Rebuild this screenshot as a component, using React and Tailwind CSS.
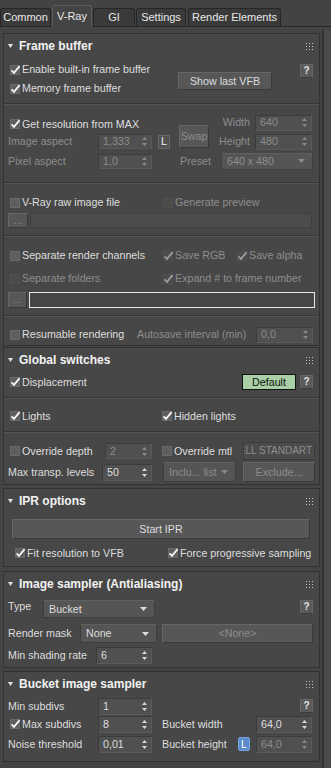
import React from "react";

const T = "text-[#dedede]";
const D = "text-[#8d8d8d]";

function Check({ checked, disabled }) {
  return (
    <svg width="12" height="12" viewBox="0 0 12 12" className="shrink-0">
      <rect x="0.5" y="1.5" width="9" height="9" fill={disabled ? "#4b4b4b" : "#5e5e5e"} stroke={disabled ? "#515151" : "#6a6a6a"} />
      {checked && (
        <path d="M1.6 6.3 L4 8.9 L9.6 2.2" fill="none" stroke={disabled ? "#9c9c9c" : "#f5f5f5"} strokeWidth="1.8" />
      )}
    </svg>
  );
}

function CB({ label, checked, disabled, className = "" }) {
  return (
    <div className={`flex items-center ${className}`}>
      <Check checked={checked} disabled={disabled} />
      <span className={`whitespace-nowrap ${disabled ? D : T}`}>{label}</span>
    </div>
  );
}

function Arrows({ disabled }) {
  return (
    <svg width="5" height="9" viewBox="0 0 5 9" className="shrink-0">
      <path d="M2.5 0 L5 3 L0 3Z M0 6 L5 6 L2.5 9Z" fill={disabled ? "#8a8a8a" : "#d8d8d8"} />
    </svg>
  );
}

function Spin({ value, disabled, className = "" }) {
  return (
    <div className={`flex items-center justify-between bg-[#505050] border border-[#3b3b3b] border-b-[#5a5a5a] border-r-[#5a5a5a] pl-[4px] pr-[4px] ${className}`}>
      <span className={disabled ? D : T}>{value}</span>
      <Arrows disabled={disabled} />
    </div>
  );
}

function Drop({ value, disabled, className = "" }) {
  return (
    <div className={`flex items-center justify-between bg-[#555555] border border-[#3d3d3d] border-t-[#606060] pl-[5px] pr-[7px] ${className}`}>
      <span className={`whitespace-nowrap ${disabled ? D : T}`}>{value}</span>
      <svg width="7" height="4" viewBox="0 0 7 4" className="shrink-0">
        <path d="M0 0H7L3.5 4Z" fill={disabled ? "#8a8a8a" : "#dcdcdc"} />
      </svg>
    </div>
  );
}

function Btn({ children, disabled, className = "" }) {
  return (
    <div className={`flex items-center justify-center whitespace-nowrap bg-[#575757] border border-[#666666] border-b-[#393939] border-r-[#393939] ${disabled ? D : T} ${className}`}>
      {children}
    </div>
  );
}

function Help({ className = "" }) {
  return (
    <div className={`w-[13px] h-[14px] bg-[#5a5a5a] border border-[#676767] border-b-[#3a3a3a] flex items-center justify-center text-[10px] font-bold text-[#e2e2e2] ${className}`}>
      ?
    </div>
  );
}

function Sep({ className = "" }) {
  return <div className={`h-[2px] border-t border-t-[#363636] border-b border-b-[#545454] ${className}`} />;
}

function Grip() {
  return (
    <svg width="7" height="7" viewBox="0 0 7 7" className="ml-auto">
      {[0, 3, 6].map((y) => [0, 3, 6].map((x) => <rect key={`${x}-${y}`} x={x} y={y} width="1" height="1" fill="#c4c4c4" />))}
    </svg>
  );
}

function Rollout({ title, className = "", children }) {
  return (
    <div className={`ml-[3px] w-[317px] border border-[#323232] bg-[#474747] ${className}`}>
      <div className="flex items-center h-[24px] pl-[4px] pr-[6px]">
        <svg width="5" height="4" viewBox="0 0 5 4">
          <path d="M0 0H5L2.5 4Z" fill="#e4e4e4" />
        </svg>
        <span className="ml-[6px] font-bold text-[12px] text-[#f2f2f2]">{title}</span>
        <Grip />
      </div>
      {children}
    </div>
  );
}

function Tab({ label, active, className = "" }) {
  return (
    <div
      className={`flex items-center justify-center rounded-t-[3px] border border-b-0 ${
        active ? "h-[22px] bg-[#444444] border-[#5c5c5c] -mb-[1px] relative z-10" : "h-[18px] bg-[#3a3a3a] border-[#262626]"
      } text-[#e8e8e8] ${className}`}
    >
      {label}
    </div>
  );
}

export default function App() {
  return (
    <div className="w-[331px] h-[768px] overflow-hidden bg-[#444444] font-['Liberation_Sans',Arial,sans-serif] text-[10.7px] leading-none flex flex-col">
      <div className="h-[27px] flex items-end gap-[1px] border-b border-[#292929] bg-[#434343] text-[11px]">
        <Tab label="Common" className="w-[51px]" />
        <Tab label="V-Ray" active className="w-[40px]" />
        <Tab label="GI" className="w-[42px]" />
        <Tab label="Settings" className="w-[50px]" />
        <Tab label="Render Elements" className="ml-[1px] w-[93px]" />
      </div>
      <div className="flex flex-1">
        <div className="w-[322px] flex flex-col">
          {/* Frame buffer */}
          <Rollout title="Frame buffer" className="mt-[6px]">
            <div className="flex pt-[2px] h-[40px]">
              <div className="flex flex-col w-[170px] pl-[6px]">
                <CB className="h-[19px]" checked label="Enable built-in frame buffer" />
                <CB className="h-[19px]" checked label="Memory frame buffer" />
              </div>
              <Btn className="mt-[12px] ml-[4px] w-[94px] h-[18px]">Show last VFB</Btn>
              <Help className="mt-[4px] ml-[28px]" />
            </div>
            <Sep className="mt-[5px]" />
            <div className="mt-[8px] grid grid-cols-[94px_54px_24px_36px_43px_57px] grid-rows-[19px_19px_20px] items-center">
              <CB className="col-start-1 col-span-3 row-start-1 pl-[6px] mt-[3px]" checked label="Get resolution from MAX" />
              <Btn disabled className="col-start-4 row-start-1 row-span-2 self-end mb-[3px] ml-[3px] w-[30px] h-[23px] bg-[#4e4e4e]">
                Swap
              </Btn>
              <span className={`col-start-5 row-start-1 text-right pr-[5px] ${D}`}>Width</span>
              <Spin className="col-start-6 row-start-1 h-[16px]" value="640" disabled />
              <span className={`col-start-1 row-start-2 pl-[4px] ${D}`}>Image aspect</span>
              <Spin className="col-start-2 row-start-2 h-[15px]" value="1,333" disabled />
              <div className="col-start-3 row-start-2 ml-[6px] w-[12px] h-[14px] bg-[#535353] border border-[#686868] flex items-center justify-center text-[#f0f0f0]">
                L
              </div>
              <span className={`col-start-5 row-start-2 text-right pr-[5px] ${D}`}>Height</span>
              <Spin className="col-start-6 row-start-2 h-[16px]" value="480" disabled />
              <span className={`col-start-1 row-start-3 pl-[4px] ${D}`}>Pixel aspect</span>
              <Spin className="col-start-2 row-start-3 h-[15px]" value="1,0" disabled />
              <div className="col-start-4 col-span-3 row-start-3 flex items-center">
                <span className={`pl-[4px] ${D}`}>Preset</span>
                <Drop disabled value="640 x 480" className="ml-auto w-[92px] h-[17px] -mr-[1px]" />
              </div>
            </div>
            <Sep className="mt-[11px]" />
            <div className="mt-[9px] h-[19px] flex items-center">
              <CB className="pl-[6px] w-[159px]" label="V-Ray raw image file" />
              <CB disabled label="Generate preview" />
            </div>
            <div className="mt-[1px] h-[15px] flex pl-[4px]">
              <Btn disabled className="w-[20px] h-full text-[10px] bg-[#4e4e4e]">...</Btn>
              <div className="ml-[2px] w-[282px] h-full bg-[#4c4c4c] border border-[#404040]" />
            </div>
            <Sep className="mt-[7px]" />
            <div className="mt-[9px] h-[19px] flex items-center">
              <CB className="pl-[6px] w-[159px]" label="Separate render channels" />
              <CB disabled checked className="w-[74px]" label="Save RGB" />
              <CB disabled checked label="Save alpha" />
            </div>
            <div className="mt-[4px] h-[19px] flex items-center">
              <CB disabled className="pl-[6px] w-[159px]" label="Separate folders" />
              <CB disabled checked label="Expand # to frame number" />
            </div>
            <div className="mt-[4px] h-[16px] flex pl-[4px]">
              <Btn disabled className="w-[19px] h-full text-[10px] bg-[#4e4e4e]">...</Btn>
              <div className="ml-[2px] w-[286px] h-full bg-[#464646] border border-[#e6e6e6]" />
            </div>
            <Sep className="mt-[7px]" />
            <div className="mt-[8px] h-[19px] flex items-center mb-[1px]">
              <CB className="pl-[6px] w-[133px]" label="Resumable rendering" />
              <span className={`whitespace-nowrap ${D}`}>Autosave interval (min)</span>
              <Spin disabled value="0,0" className="ml-auto mr-[6px] w-[57px] h-[16px]" />
            </div>
          </Rollout>

          {/* Global switches */}
          <Rollout title="Global switches" className="mt-[1px]">
            <div className="mt-[1px] h-[18px] flex items-center">
              <CB checked className="pl-[6px]" label="Displacement" />
              <div className="ml-auto w-[54px] h-[16px] bg-[#a9cfa6] border border-[#121212] text-[#121212] flex items-center justify-center">
                Default
              </div>
              <Help className="ml-[4px] mr-[6px]" />
            </div>
            <Sep className="mt-[6px]" />
            <div className="mt-[8px] h-[18px] flex items-center">
              <CB checked className="pl-[6px] w-[158px]" label="Lights" />
              <CB checked label="Hidden lights" />
            </div>
            <Sep className="mt-[6px]" />
            <div className="mt-[9px] h-[18px] flex items-center">
              <CB className="pl-[6px] w-[101px]" label="Override depth" />
              <Spin disabled value="2" className="w-[47px] h-[16px]" />
              <CB className="ml-[10px] w-[81px]" label="Override mtl" />
              <div className={`w-[72px] h-[18px] border border-[#3c3c3c] bg-[#4b4b4b] overflow-hidden flex items-center justify-end pr-[2px] whitespace-nowrap text-[10px] ${D}`}>
                SHELL STANDART
              </div>
            </div>
            <div className="mt-[2px] h-[20px] flex items-center mb-[2px]">
              <span className={`pl-[4px] w-[98px] whitespace-nowrap ${T}`}>Max transp. levels</span>
              <Spin value="50" className="w-[50px] h-[17px]" />
              <Drop disabled value="Inclu... list" className="ml-[11px] w-[73px] h-[20px] bg-[#4c4c4c]" />
              <Btn disabled className="ml-[7px] w-[72px] h-[20px] bg-[#4e4e4e]">Exclude...</Btn>
            </div>
          </Rollout>

          {/* IPR options */}
          <Rollout title="IPR options" className="mt-[3px]">
            <Btn className="mt-[6px] ml-[8px] w-[298px] h-[20px]">Start IPR</Btn>
            <div className="mt-[5px] h-[18px] flex items-center mb-[4px]">
              <CB checked className="pl-[11px] w-[164px]" label="Fit resolution to VFB" />
              <CB checked label="Force progressive sampling" />
            </div>
          </Rollout>

          {/* Image sampler */}
          <Rollout title="Image sampler (Antialiasing)" className="mt-[4px]">
            <div className="mt-[4px] h-[18px] flex items-center">
              <span className={`pl-[4px] w-[39px] mb-[6px] ${T}`}>Type</span>
              <Drop value="Bucket" className="w-[112px] h-[18px]" />
              <Help className="ml-auto mr-[6px] self-start" />
            </div>
            <div className="mt-[6px] h-[19px] flex items-center">
              <span className={`pl-[4px] w-[76px] whitespace-nowrap ${T}`}>Render mask</span>
              <Drop value="None" className="w-[77px] h-[19px]" />
              <Btn disabled className="ml-[5px] w-[151px] h-[19px] bg-[#4e4e4e]">&lt;None&gt;</Btn>
            </div>
            <div className="mt-[3px] h-[18px] flex items-center mb-[3px]">
              <span className={`pl-[4px] w-[92px] whitespace-nowrap ${T}`}>Min shading rate</span>
              <Spin value="6" className="w-[56px] h-[17px]" />
            </div>
          </Rollout>

          {/* Bucket image sampler */}
          <Rollout title="Bucket image sampler" className="mt-[3px]">
            <div className="mt-[1px] h-[18px] flex items-center">
              <span className={`pl-[4px] w-[94px] ${T}`}>Min subdivs</span>
              <Spin value="1" className="w-[54px] h-[17px]" />
              <Help className="ml-auto mr-[6px]" />
            </div>
            <div className="h-[18px] flex items-center">
              <CB checked className="pl-[6px] w-[94px]" label="Max subdivs" />
              <Spin value="8" className="w-[54px] h-[17px]" />
              <span className={`ml-[10px] w-[94px] ${T}`}>Bucket width</span>
              <Spin value="64,0" className="w-[56px] h-[17px]" />
            </div>
            <div className="mt-[2px] h-[18px] flex items-center mb-[8px]">
              <span className={`pl-[4px] w-[94px] whitespace-nowrap ${T}`}>Noise threshold</span>
              <Spin value="0,01" className="w-[54px] h-[17px]" />
              <span className={`ml-[10px] w-[76px] whitespace-nowrap ${T}`}>Bucket height</span>
              <div className="w-[12px] h-[14px] bg-[#5b8bcc] border border-[#7aa4de] rounded-[2px] flex items-center justify-center text-white">
                L
              </div>
              <Spin disabled value="64,0" className="ml-[6px] w-[56px] h-[17px]" />
            </div>
          </Rollout>
        </div>
        <div className="flex-1 mt-[3px] border-l-2 border-[#333333] bg-[#4a4a4a]" />
      </div>
    </div>
  );
}
